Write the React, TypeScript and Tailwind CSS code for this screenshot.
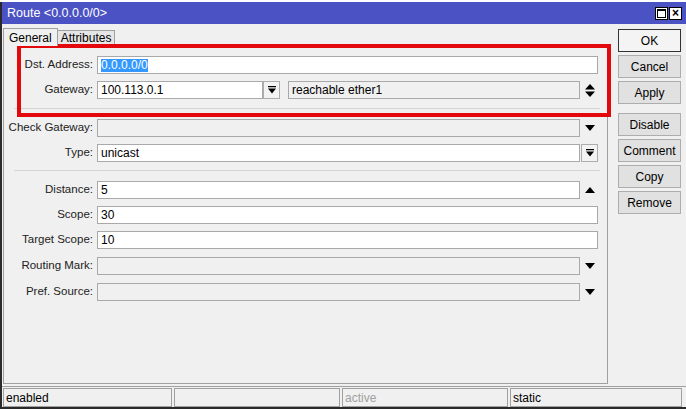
const font = { fontFamily: '"Liberation Sans", Arial, sans-serif' };

function DownArrow() {
  return (
    <svg width="10" height="6" viewBox="0 0 10 6" className="block">
      <path d="M0 0h10L5 6z" fill="#000" />
    </svg>
  );
}

function UpArrow() {
  return (
    <svg width="10" height="6" viewBox="0 0 10 6" className="block">
      <path d="M0 6h10L5 0z" fill="#000" />
    </svg>
  );
}

function UpDown() {
  return (
    <svg width="10" height="13" viewBox="0 0 10 13" className="block">
      <path d="M0 5.5h10L5 0z M0 7.5h10L5 13z" fill="#000" />
    </svg>
  );
}

function DropButton() {
  return (
    <div className="flex h-[18px] w-[17px] items-center justify-center border border-[#adadad] bg-[#f3f3f3]">
      <svg width="8" height="8" viewBox="0 0 8 8" className="block">
        <path d="M0 0.5h8" stroke="#000" strokeWidth="1.5" />
        <path d="M0 2.5h8L4 7.5z" fill="#000" />
      </svg>
    </div>
  );
}

function Field({
  value,
  disabled,
  selected,
  width,
}: {
  value?: string;
  disabled?: boolean;
  selected?: boolean;
  width: string;
}) {
  return (
    <div
      className={`flex h-[18px] items-center border border-[#a9a9a9] px-[3px] text-[12px] text-black ${width} ${
        disabled ? "bg-[#f0f0f0]" : "bg-white"
      }`}
    >
      {selected ? <span className="bg-[#3399ff] leading-[13px] text-white">{value}</span> : value}
    </div>
  );
}

function Row({ label, top, children }: { label: string; top: string; children: React.ReactNode }) {
  return (
    <div className={`flex items-center ${top}`}>
      <div className="w-[92px] pr-[4px] text-right text-[11.5px] text-[#222]">{label}:</div>
      {children}
    </div>
  );
}

function Btn({ label, primary, top }: { label: string; primary?: boolean; top: string }) {
  return (
    <div
      className={`flex h-[23px] w-[63px] items-center justify-center border text-[12px] text-black ${top} ${
        primary ? "border-[#333] bg-[#f4f4f4]" : "border-[#adadad] bg-[#e1e1e1]"
      }`}
    >
      {label}
    </div>
  );
}

export default function App() {
  return (
    <div className="h-[411px] w-[686px] overflow-hidden bg-white" style={font}>
      <div className="h-[2px] w-full bg-white" />
      <div className="flex h-[407px] flex-col border-b-2 border-l-2 border-[#2a2a2a] bg-[#f0f0f0]">
        <div className="flex h-[22px] items-center justify-between bg-[#4a52c4] pl-[5px] pr-[4px]">
          <span className="text-[12.5px] text-white">Route &lt;0.0.0.0/0&gt;</span>
          <div className="flex gap-[1px]">
            <div className="flex h-[13px] w-[13px] items-center justify-center border border-black bg-white">
              <div className="h-[9px] w-[9px] border border-black border-t-2" />
            </div>
            <div className="flex h-[13px] w-[13px] items-center justify-center border border-black bg-white text-[12px] font-bold leading-none text-black">
              ×
            </div>
          </div>
        </div>

        <div className="flex flex-1">
          <div className="relative flex flex-col pl-[1px] pt-[4px]">
            <div className="flex items-end">
              <div className="z-10 -mb-px flex h-[18px] items-center border border-b-0 border-[#a0a0a0] bg-[#f0f0f0] px-[5px] text-[12px] text-black">
                General
              </div>
              <div className="flex h-[15px] items-center border border-b-0 border-l-0 border-[#a0a0a0] bg-[#e6e6e6] px-[3px] text-[12px] text-black">
                Attributes
              </div>
            </div>
            <div className="flex h-[339px] w-[605px] flex-col border border-[#a0a0a0] px-[1px]">
              <Row label="Dst. Address" top="mt-[10px]">
                <Field value="0.0.0.0/0" selected width="w-[501px]" />
              </Row>
              <Row label="Gateway" top="mt-[7px]">
                <Field value="100.113.0.1" width="w-[166px]" />
                <DropButton />
                <div className="w-[8px]" />
                <Field value="reachable ether1" disabled width="w-[292px]" />
                <div className="ml-[5px]">
                  <UpDown />
                </div>
              </Row>
              <div className="ml-[9px] mr-[6px] mt-[9px] h-px bg-[#d5d5d5]" />
              <Row label="Check Gateway" top="mt-[10px]">
                <Field disabled width="w-[483px]" />
                <div className="ml-[5px]">
                  <DownArrow />
                </div>
              </Row>
              <Row label="Type" top="mt-[7px]">
                <Field value="unicast" width="w-[483px]" />
                <div className="ml-[1px]">
                  <DropButton />
                </div>
              </Row>
              <div className="ml-[9px] mr-[6px] mt-[8px] h-px bg-[#d5d5d5]" />
              <Row label="Distance" top="mt-[10px]">
                <Field value="5" width="w-[483px]" />
                <div className="ml-[5px]">
                  <UpArrow />
                </div>
              </Row>
              <Row label="Scope" top="mt-[7px]">
                <Field value="30" width="w-[501px]" />
              </Row>
              <Row label="Target Scope" top="mt-[7px]">
                <Field value="10" width="w-[501px]" />
              </Row>
              <Row label="Routing Mark" top="mt-[8px]">
                <Field disabled width="w-[483px]" />
                <div className="ml-[5px]">
                  <DownArrow />
                </div>
              </Row>
              <Row label="Pref. Source" top="mt-[8px]">
                <Field disabled width="w-[483px]" />
                <div className="ml-[5px]">
                  <DownArrow />
                </div>
              </Row>
            </div>
            <div className="pointer-events-none absolute left-[15px] top-[20px] h-[73px] w-[594px] border-4 border-[#e3080b]" />
          </div>

          <div className="ml-[10px] flex flex-col pt-[5px]">
            <Btn label="OK" primary top="" />
            <Btn label="Cancel" top="mt-[3px]" />
            <Btn label="Apply" top="mt-[3px]" />
            <Btn label="Disable" top="mt-[9px]" />
            <Btn label="Comment" top="mt-[3px]" />
            <Btn label="Copy" top="mt-[3px]" />
            <Btn label="Remove" top="mt-[3px]" />
          </div>
        </div>

        <div className="flex h-[21px] gap-[2px] border-t border-[#a0a0a0] pl-[1px] pr-[4px] pt-[1px] text-[12px]">
          <div className="flex w-[169px] items-center border border-[#a0a0a0] px-[2px] text-black">enabled</div>
          <div className="w-[166px] border border-[#a0a0a0]" />
          <div className="flex w-[166px] items-center border border-[#a0a0a0] px-[2px] text-[#a0a0a0]">active</div>
          <div className="flex flex-1 items-center border border-[#a0a0a0] px-[2px] text-black">static</div>
        </div>
      </div>
    </div>
  );
}
